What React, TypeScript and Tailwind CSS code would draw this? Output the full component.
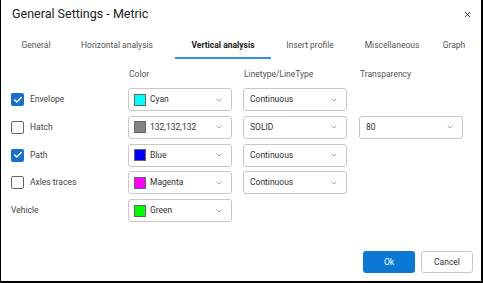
import { ChevronDown, X, Check } from 'lucide-react';

interface Row {
  label: string;
  checkbox: boolean;
  checked?: boolean;
  color: string;
  colorName: string;
  linetype?: string;
  transparency?: string;
}

const rows: Row[] = [
  { label: 'Envelope', checkbox: true, checked: true, color: '#00ffff', colorName: 'Cyan', linetype: 'Continuous' },
  { label: 'Hatch', checkbox: true, checked: false, color: '#848484', colorName: '132,132,132', linetype: 'SOLID', transparency: '80' },
  { label: 'Path', checkbox: true, checked: true, color: '#0000ff', colorName: 'Blue', linetype: 'Continuous' },
  { label: 'Axles traces', checkbox: true, checked: false, color: '#ff00ff', colorName: 'Magenta', linetype: 'Continuous' },
  { label: 'Vehicle', checkbox: false, color: '#00ff00', colorName: 'Green' },
];

// tab widths are fixed so labels land where the reference has them
const tabs = [
  { name: 'General', cls: 'w-[56px]' },
  { name: 'Horizontal analysis', cls: 'w-[106px]' },
  { name: 'Vertical analysis', cls: 'w-[96px] ml-[5px]' },
  { name: 'Insert profile', cls: 'w-[78px]' },
  { name: 'Miscellaneous', cls: 'w-[86px]' },
  { name: 'Graph', cls: 'w-[38px]' },
];

function Select({ children }: { children: React.ReactNode }) {
  return (
    <div className="w-[104px] h-[23px] border border-[#c8c8c8] rounded-[3px] flex items-center pl-[5px] pr-[8px] bg-white">
      <div className="flex-1 flex items-center gap-[4px] text-[#333]">{children}</div>
      <ChevronDown className="w-[8px] h-[8px] text-[#777]" strokeWidth={2} />
    </div>
  );
}

export default function App() {
  return (
    <div
      className="w-[483px] h-[283px] bg-white border-l border-r-2 border-b-2 border-black flex flex-col text-[8.5px] text-[#444]"
      style={{ fontFamily: 'Roboto, "Liberation Sans", sans-serif' }}
    >
      {/* Header */}
      <div className="flex items-center justify-between pl-[11px] pr-[9px] h-[28px]">
        <h1 className="text-[12.5px] text-[#222]">General Settings - Metric</h1>
        <X className="w-[9px] h-[9px] text-[#333]" strokeWidth={2.5} />
      </div>

      {/* Tabs */}
      <div className="flex pl-[7px]">
        {tabs.map(t => {
          const active = t.name === 'Vertical analysis';
          return (
            <div
              key={t.name}
              className={`h-[31px] pt-[5px] flex items-center justify-center border-b-2 ${t.cls} ${
                active ? 'border-[#3a8fdc] font-bold text-[#222]' : 'border-transparent text-[#555]'
              }`}
            >
              {t.name}
            </div>
          );
        })}
      </div>

      {/* Table */}
      <div className="flex flex-col pl-[10px] pt-[7px]">
        <div className="flex h-[17px] items-center text-[#555]">
          <div className="w-[117px]" />
          <div className="w-[115px] pl-[1px]">Color</div>
          <div className="w-[116px] pl-[1px]">Linetype/LineType</div>
          <div className="pl-[1px]">Transparency</div>
        </div>
        <div className="flex flex-col gap-[4.75px] mt-[5px]">
          {rows.map(r => (
            <div key={r.label} className="flex items-center h-[23px]">
              <div className="w-[117px] flex items-center gap-[6px]">
                {r.checkbox && (
                  <div
                    className={`w-[13px] h-[13px] rounded-[2px] flex items-center justify-center ${
                      r.checked ? 'bg-[#1a6fc9]' : 'border border-[#666] bg-white'
                    }`}
                  >
                    {r.checked && <Check className="w-[10px] h-[10px] text-white" strokeWidth={3.5} />}
                  </div>
                )}
                <span>{r.label}</span>
              </div>
              <div className="w-[115px]">
                <Select>
                  <span className="w-[12px] h-[12px] border border-[#666]" style={{ backgroundColor: r.color }} />
                  <span>{r.colorName}</span>
                </Select>
              </div>
              <div className="w-[116px]">
                {r.linetype && <Select><span className="pl-[1px]">{r.linetype}</span></Select>}
              </div>
              <div>
                {r.transparency && <Select><span className="pl-[1px]">{r.transparency}</span></Select>}
              </div>
            </div>
          ))}
        </div>
      </div>

      {/* Footer */}
      <div className="mt-auto flex justify-end gap-[6px] pr-[8px] pb-[8px]">
        <button className="w-[52px] h-[22px] rounded-[3px] bg-[#0b78d4] text-white">Ok</button>
        <button className="w-[52px] h-[22px] rounded-[3px] border border-[#c8c8c8] bg-white text-[#333]">Cancel</button>
      </div>
    </div>
  );
}
